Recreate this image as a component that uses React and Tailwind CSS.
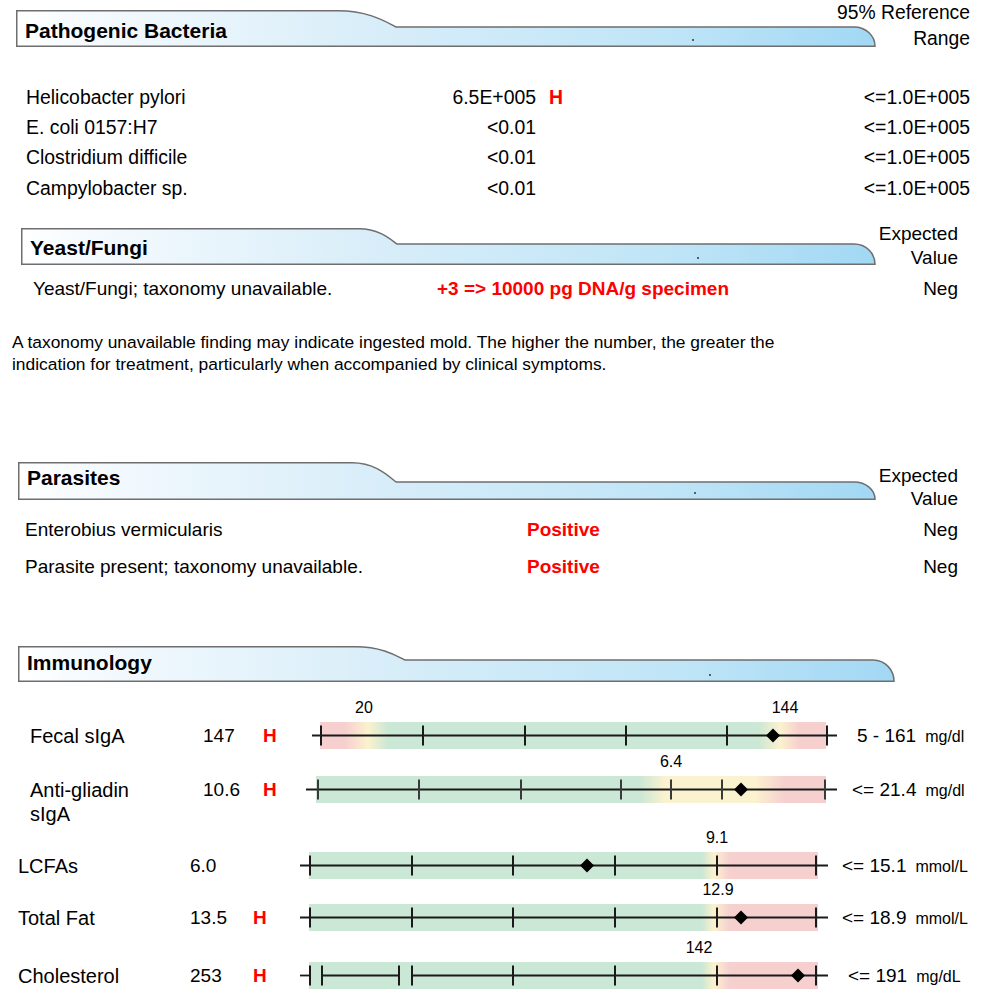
const FONT = "font-['Liberation_Sans',Arial,Helvetica,sans-serif]";

function Tab({ id, title, className, width, height, step, curveFrom, curveTo, dotX, titleClass }) {
  const w = width;
  const h = height;
  const s = step;
  const dx = curveTo - curveFrom;
  const r = 22;
  const d = `M0.75,${h - 0.75} L0.75,0.75 L${curveFrom},0.75 C${curveFrom + dx * 0.55},0.75 ${curveTo - dx * 0.15},${s * 0.75} ${curveTo},${s} L${w - r},${s} C${w - r * 0.45},${s} ${w - 1},${s + (h - s) * 0.45} ${w - 1},${h - 0.75} Z`;

  return (
    <div className={`relative shrink-0 ${className}`}>
      <svg width={w} height={h} viewBox={`0 0 ${w} ${h}`} className="block">
        <defs>
          <linearGradient id={id} x1="0" y1="0" x2="1" y2="0">
            <stop offset="0" stopColor="#ffffff" />
            <stop offset="0.08" stopColor="#f5fafe" />
            <stop offset="0.4" stopColor="#d9eef9" />
            <stop offset="0.75" stopColor="#c0e5f7" />
            <stop offset="1" stopColor="#a2d8f4" />
          </linearGradient>
        </defs>
        <path d={d} fill={`url(#${id})`} stroke="#6e6e6e" strokeWidth="1.5" />
        <circle cx={dotX} cy={h - 7} r="1" fill="#333" />
      </svg>
      <div className={`absolute left-[9px] text-[21px] leading-[24px] font-bold ${titleClass}`}>
        {title}
      </div>
    </div>
  );
}

const RED = "#f6cfcf";
const YEL = "#fbf2cf";
const GRN = "#cbe7d5";

function Gauge({ id, line, bg, stops, ticks, diamond, labels, segments, tickColor = "#1a1a1a" }) {
  const o = 296;
  const segs = segments || [line];

  return (
    <div className="relative h-[27px] w-[544px] shrink-0">
      <svg width="544" height="27" viewBox="0 0 544 27" className="block">
        <defs>
          <linearGradient
            id={id}
            gradientUnits="userSpaceOnUse"
            x1={bg[0] - o}
            y1="0"
            x2={bg[1] - o}
            y2="0"
          >
            {stops.map(([x, c], i) => (
              <stop key={i} offset={(x - bg[0]) / (bg[1] - bg[0])} stopColor={c} />
            ))}
          </linearGradient>
        </defs>
        <rect x={bg[0] - o} y="0" width={bg[1] - bg[0]} height="27" fill={`url(#${id})`} />
        {segs.map(([a, b], i) => (
          <line key={i} x1={a - o} y1="13.5" x2={b - o} y2="13.5" stroke="#1a1a1a" strokeWidth="1.8" />
        ))}
        {ticks.map((t) => (
          <line key={t} x1={t - o} y1="3.5" x2={t - o} y2="23.5" stroke={tickColor} strokeWidth="2" />
        ))}
        <polygon
          points={`${diamond - o},6.5 ${diamond - o + 7},13.5 ${diamond - o},20.5 ${diamond - o - 7},13.5`}
          fill="#000"
        />
      </svg>
      {labels.map((l) => (
        <span
          key={l.text}
          className="absolute -top-[24px] -translate-x-1/2 text-[16px] leading-[20px] whitespace-nowrap"
          style={{ left: l.x - o }}
        >
          {l.text}
        </span>
      ))}
    </div>
  );
}

const bacteria = [
  { name: "Helicobacter pylori", value: "6.5E+005", high: true },
  { name: "E. coli 0157:H7", value: "<0.01" },
  { name: "Clostridium difficile", value: "<0.01" },
  { name: "Campylobacter sp.", value: "<0.01" },
];

const fatStops = [
  [309, GRN],
  [702, GRN],
  [714, YEL],
  [730, RED],
  [818, RED],
];

const immunology = [
  {
    id: "fecal",
    label: ["Fecal sIgA"],
    value: "147",
    high: true,
    rowClass: "h-[54px]",
    labelClass: "pl-[30px] w-[203px]",
    valueClass: "w-[60px]",
    hClass: "w-[33px]",
    rangeClass: "ml-[17px]",
    range: "5 - 161",
    unit: "mg/dl",
    gauge: {
      line: [312, 837],
      bg: [320, 826],
      stops: [
        [320, RED],
        [345, RED],
        [368, YEL],
        [388, GRN],
        [758, GRN],
        [780, YEL],
        [800, RED],
        [826, RED],
      ],
      ticks: [321, 423, 525, 626, 727, 827],
      diamond: 773,
      labels: [
        { x: 364, text: "20" },
        { x: 785, text: "144" },
      ],
    },
  },
  {
    id: "gliadin",
    label: ["Anti-gliadin", "sIgA"],
    value: "10.6",
    high: true,
    rowClass: "h-[76px]",
    labelClass: "pl-[30px] w-[203px]",
    valueClass: "w-[60px]",
    hClass: "w-[33px]",
    rangeClass: "ml-[12px]",
    range: "<= 21.4",
    unit: "mg/dl",
    gauge: {
      line: [306, 837],
      bg: [316, 826],
      stops: [
        [316, GRN],
        [640, GRN],
        [665, YEL],
        [755, YEL],
        [785, RED],
        [826, RED],
      ],
      ticks: [318, 419, 521, 621, 671, 722, 825],
      tickColor: "#3a3a3a",
      diamond: 741,
      labels: [{ x: 671, text: "6.4" }],
    },
  },
  {
    id: "lcfa",
    label: ["LCFAs"],
    value: "6.0",
    high: false,
    rowClass: "h-[52px]",
    labelClass: "pl-[18px] w-[190px]",
    valueClass: "w-[63px]",
    hClass: "w-[43px]",
    rangeClass: "ml-[2px]",
    range: "<= 15.1",
    unit: "mmol/L",
    gauge: {
      line: [300, 828],
      bg: [309, 818],
      stops: fatStops,
      ticks: [310, 412, 513, 615, 717, 816],
      diamond: 587,
      labels: [{ x: 717, text: "9.1" }],
    },
  },
  {
    id: "fat",
    label: ["Total Fat"],
    value: "13.5",
    high: true,
    rowClass: "h-[58px]",
    labelClass: "pl-[18px] w-[190px]",
    valueClass: "w-[63px]",
    hClass: "w-[43px]",
    rangeClass: "ml-[2px]",
    range: "<= 18.9",
    unit: "mmol/L",
    gauge: {
      line: [300, 828],
      bg: [309, 818],
      stops: fatStops,
      ticks: [310, 412, 513, 615, 717, 816],
      diamond: 741,
      labels: [{ x: 718, text: "12.9" }],
    },
  },
  {
    id: "chol",
    label: ["Cholesterol"],
    value: "253",
    high: true,
    rowClass: "h-[30px]",
    labelClass: "pl-[18px] w-[190px]",
    valueClass: "w-[63px]",
    hClass: "w-[43px]",
    rangeClass: "ml-[8px]",
    range: "<= 191",
    unit: "mg/dL",
    gauge: {
      line: [300, 828],
      bg: [309, 818],
      stops: fatStops,
      segments: [
        [300, 310],
        [322, 399],
        [412, 828],
      ],
      ticks: [310, 322, 399, 412, 513, 615, 717, 816],
      diamond: 798,
      labels: [{ x: 699, text: "142" }],
    },
  },
];

export default function App() {
  return (
    <div className={`h-[1002px] w-[1000px] overflow-hidden bg-white text-black ${FONT}`}>
      {/* Pathogenic Bacteria */}
      <div className="flex h-[47px] items-start">
        <Tab
          id="tab-bact"
          title="Pathogenic Bacteria"
          className="ml-[16px] mt-[10px]"
          width={860}
          height={37}
          step={17}
          curveFrom={322}
          curveTo={380}
          dotX={677}
          titleClass="top-[9px]"
        />
        <div className="-ml-[46px] w-[140px] shrink-0 whitespace-nowrap text-right text-[19.3px] leading-[26px]">
          <div>95% Reference</div>
          <div>Range</div>
        </div>
      </div>

      <div className="mt-[35px]">
        {bacteria.map((b) => (
          <div key={b.name} className="flex h-[30.4px] items-center pl-[26px] pr-[30px] text-[19.4px]">
            <div className="w-[349px]">{b.name}</div>
            <div className="w-[161px] text-right">{b.value}</div>
            {b.high && <div className="ml-[13px] font-bold text-[#ff0000]">H</div>}
            <div className="ml-auto">{"<=1.0E+005"}</div>
          </div>
        ))}
      </div>

      {/* Yeast/Fungi */}
      <div className="mt-[18px] flex h-[43px] items-start">
        <Tab
          id="tab-yeast"
          title="Yeast/Fungi"
          className="ml-[21px] mt-[6px]"
          width={855}
          height={37}
          step={16}
          curveFrom={338}
          curveTo={376}
          dotX={677}
          titleClass="top-[8px] left-[7px]"
        />
        <div className="ml-auto pr-[42px] text-right text-[19px] leading-[24px]">
          <div>Expected</div>
          <div>Value</div>
        </div>
      </div>

      <div className="mt-[10px] flex h-[30px] items-center pl-[33px] pr-[42px] text-[19px]">
        <div className="w-[404px]">Yeast/Fungi; taxonomy unavailable.</div>
        <div className="font-bold text-[#ff0000]">{"+3 => 10000 pg DNA/g specimen"}</div>
        <div className="ml-auto">Neg</div>
      </div>

      <p className="mt-[26px] pl-[12px] text-[17.4px] leading-[22px]">
        A taxonomy unavailable finding may indicate ingested mold. The higher the number, the greater the
        <br />
        indication for treatment, particularly when accompanied by clinical symptoms.
      </p>

      {/* Parasites */}
      <div className="mt-[87px] flex h-[38px] items-start">
        <Tab
          id="tab-para"
          title="Parasites"
          className="ml-[18px]"
          width={858}
          height={38}
          step={20}
          curveFrom={334}
          curveTo={378}
          dotX={677}
          titleClass="top-[4px] left-[8px]"
        />
        <div className="ml-auto mt-[2px] pr-[42px] text-right text-[19px] leading-[23px]">
          <div>Expected</div>
          <div>Value</div>
        </div>
      </div>

      <div className="mt-[12px]">
        {["Enterobius vermicularis", "Parasite present; taxonomy unavailable."].map((p) => (
          <div key={p} className="flex h-[37px] items-center pl-[25px] pr-[42px] text-[19px]">
            <div className="w-[502px]">{p}</div>
            <div className="font-bold text-[#ff0000]">Positive</div>
            <div className="ml-auto">Neg</div>
          </div>
        ))}
      </div>

      {/* Immunology */}
      <div className="mt-[60px] flex h-[36px]">
        <Tab
          id="tab-imm"
          title="Immunology"
          className="ml-[18px]"
          width={877}
          height={36}
          step={14}
          curveFrom={338}
          curveTo={387}
          dotX={692}
          titleClass="top-[5px] left-[8px]"
        />
      </div>

      <div className="mt-[42px]">
        {immunology.map((r) => (
          <div key={r.id} className={`flex items-start ${r.rowClass}`}>
            <div className={`shrink-0 text-[20px] leading-[24px] ${r.labelClass}`}>
              {r.label.map((l) => (
                <div key={l}>{l}</div>
              ))}
            </div>
            <div className={`shrink-0 text-[19px] leading-[24px] ${r.valueClass}`}>{r.value}</div>
            <div className={`shrink-0 text-[19px] font-bold leading-[24px] text-[#ff0000] ${r.hClass}`}>
              {r.high ? "H" : ""}
            </div>
            <div className="flex h-[24px] items-center">
              <Gauge id={`g-${r.id}`} {...r.gauge} />
            </div>
            <div className={`whitespace-nowrap leading-[24px] ${r.rangeClass}`}>
              <span className="text-[19px]">{r.range}</span>
              <span className="ml-[9px] text-[16px]">{r.unit}</span>
            </div>
          </div>
        ))}
      </div>
    </div>
  );
}
